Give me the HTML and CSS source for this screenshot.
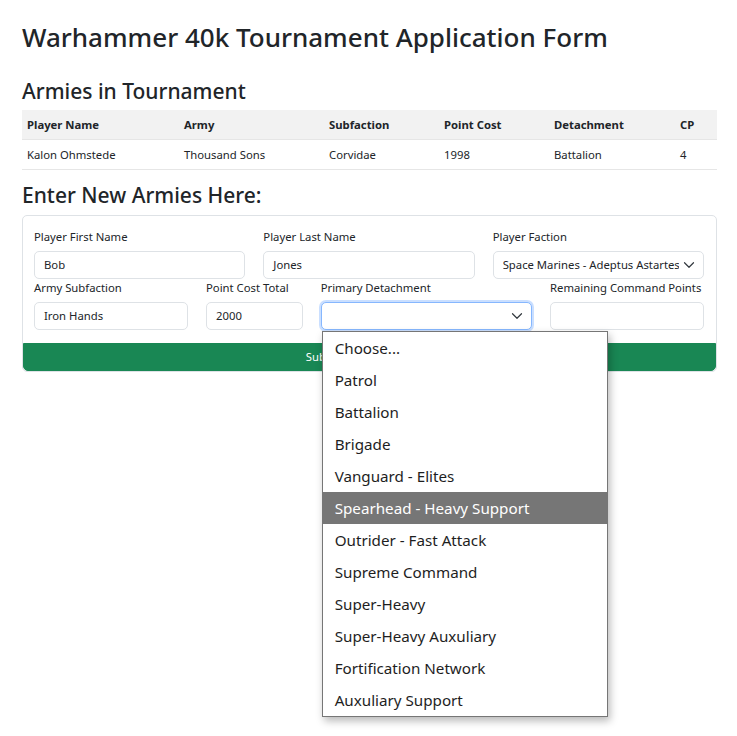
FILE: index.html
```html
<!DOCTYPE html>
<html lang="en">
<head>
<meta charset="utf-8">
<title>Warhammer 40k Tournament Application Form</title>
<link rel="stylesheet" href="styles.css">
</head>
<body>
<div class="container">
  <h1 class="title">Warhammer 40k Tournament Application Form</h1>
  <h2 class="section-title">Armies in Tournament</h2>
  <table class="armies">
    <thead>
      <tr>
        <th class="c-name">Player Name</th>
        <th class="c-army">Army</th>
        <th class="c-sub">Subfaction</th>
        <th class="c-cost">Point Cost</th>
        <th class="c-det">Detachment</th>
        <th class="c-cp">CP</th>
      </tr>
    </thead>
    <tbody>
      <tr>
        <td>Kalon Ohmstede</td>
        <td>Thousand Sons</td>
        <td>Corvidae</td>
        <td>1998</td>
        <td>Battalion</td>
        <td>4</td>
      </tr>
    </tbody>
  </table>

  <h2 class="section-title second">Enter New Armies Here:</h2>
  <form class="card">
    <div class="card-body">
      <div class="row">
        <div class="field span-4">
          <label class="label">Player First Name</label>
          <div class="control">Bob</div>
        </div>
        <div class="field span-4">
          <label class="label">Player Last Name</label>
          <div class="control">Jones</div>
        </div>
        <div class="field span-4">
          <label class="label">Player Faction</label>
          <div class="control select">
            <span class="select-text">Space Marines - Adeptus Astartes</span>
            <svg class="chev" viewBox="0 0 16 16" width="12" height="12"><path d="M2 5l6 6 6-6" fill="none" stroke="#343a40" stroke-width="1.6" stroke-linecap="round" stroke-linejoin="round"/></svg>
          </div>
        </div>
      </div>
      <div class="row">
        <div class="field span-3">
          <label class="label">Army Subfaction</label>
          <div class="control">Iron Hands</div>
        </div>
        <div class="field span-2">
          <label class="label">Point Cost Total</label>
          <div class="control">2000</div>
        </div>
        <div class="field span-4 dropdown-host">
          <label class="label">Primary Detachment</label>
          <div class="control select focused">
            <span class="select-text"></span>
            <svg class="chev" viewBox="0 0 16 16" width="12" height="12"><path d="M2 5l6 6 6-6" fill="none" stroke="#343a40" stroke-width="1.6" stroke-linecap="round" stroke-linejoin="round"/></svg>
          </div>
          <ul class="popup">
            <li>Choose...</li>
            <li>Patrol</li>
            <li>Battalion</li>
            <li>Brigade</li>
            <li>Vanguard - Elites</li>
            <li class="active">Spearhead - Heavy Support</li>
            <li>Outrider - Fast Attack</li>
            <li>Supreme Command</li>
            <li>Super-Heavy</li>
            <li>Super-Heavy Auxuliary</li>
            <li>Fortification Network</li>
            <li>Auxuliary Support</li>
          </ul>
        </div>
        <div class="field span-3">
          <label class="label">Remaining Command Points</label>
          <div class="control"></div>
        </div>
      </div>
    </div>
    <button type="button" class="submit">Submit Your Application</button>
  </form>
</div>
</body>
</html>
```

FILE: styles.css
```css
* { box-sizing: border-box; }

html, body {
  min-height: 736px;
}

body {
  margin: 0;
  background: #fff;
  color: #212529;
  font-family: "Noto Sans", "Open Sans", sans-serif;
  font-size: 11.3px;
  line-height: 1.5;
}

.container {
  padding: 22px 20px 0 22px;
}

.title {
  margin: 0 0 26px;
  font-size: 26px;
  font-weight: 500;
  line-height: 1.2;
}

.section-title {
  margin: 0 0 6px;
  font-size: 21px;
  font-weight: 500;
  line-height: 1.2;
}

.section-title.second {
  margin-top: 13px;
}

.armies {
  width: 100%;
  border-collapse: collapse;
  margin-bottom: 12px;
}

.armies th,
.armies td {
  text-align: left;
  padding: 6px 5px;
  border-bottom: 1px solid #e6e6e6;
  line-height: 17px;
}

.armies thead th {
  background: #f2f2f2;
  font-weight: 700;
}

.c-name { width: 157px; }
.c-army { width: 145px; }
.c-sub { width: 115px; }
.c-cost { width: 110px; }
.c-det { width: 126px; }

.card {
  border: 1px solid #dee2e6;
  border-radius: 5px;
  display: flex;
  flex-direction: column;
}

.card-body {
  padding: 12px 12px 13px 11px;
  display: flex;
  flex-direction: column;
}

.row {
  display: grid;
  grid-template-columns: repeat(12, minmax(0, 1fr));
  column-gap: 18px;
}

.span-2 { grid-column: span 2; }
.span-3 { grid-column: span 3; }
.span-4 { grid-column: span 4; }

.field {
  display: flex;
  flex-direction: column;
  min-width: 0;
}

.label {
  display: block;
  margin-bottom: 5px;
  line-height: 18px;
  white-space: nowrap;
}

.control {
  height: 28px;
  border: 1px solid #dee2e6;
  border-radius: 5px;
  padding: 0 9px;
  display: flex;
  align-items: center;
  line-height: 18px;
  white-space: nowrap;
  overflow: hidden;
  background: #fff;
}

.select {
  justify-content: space-between;
  padding-right: 8px;
}

.select-text {
  overflow: hidden;
  min-width: 0;
}

.chev {
  flex: none;
  margin-left: 4px;
}

.focused {
  border-color: #86b7fe;
  box-shadow: 0 0 0 2px rgba(13, 110, 253, 0.22);
}

.dropdown-host {
  position: relative;
}

.popup {
  position: absolute;
  top: calc(100% + 1px);
  left: 1px;
  width: 286px;
  margin: 0;
  padding: 0;
  list-style: none;
  background: #fff;
  border: 1px solid #767676;
  box-shadow: 2px 4px 8px rgba(0, 0, 0, 0.28);
  font-size: 15.2px;
  color: #1e1e1e;
  z-index: 10;
}

.popup li {
  height: 32px;
  line-height: 32px;
  padding-left: 12px;
  white-space: nowrap;
}

.popup li.active {
  background: #767676;
  color: #fff;
}

.submit {
  display: block;
  width: 100%;
  height: 28px;
  border: 1px solid #198754;
  border-radius: 0 0 5px 5px;
  background: #198754;
  color: #fff;
  font-family: inherit;
  font-size: 11.3px;
  margin: 0;
}
```
